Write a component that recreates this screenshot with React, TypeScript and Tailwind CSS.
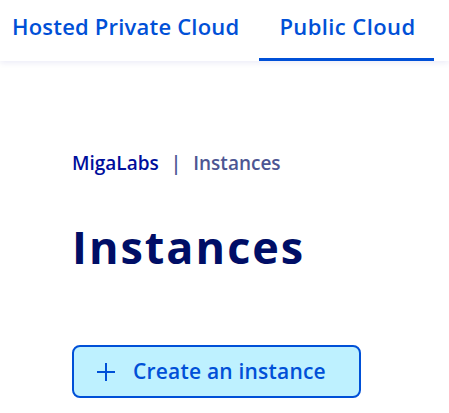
export default function App() {
  return (
    <div
      className="min-h-screen bg-white overflow-hidden"
      style={{ fontFamily: "'Open Sans', 'Noto Sans', sans-serif" }}
    >
      {/* ===== TABS ===== */}
      <nav className="relative h-[61px] bg-white shadow-[0_2px_6px_rgba(0,14,156,0.08)] flex whitespace-nowrap">
        <div className="pl-3 pr-5 pt-3 text-[22px] leading-[28px] tracking-[0.2px] font-semibold text-[#0050d7] h-full">
          Hosted Private Cloud
        </div>
        <div className="w-[175px] px-5 pt-3 text-[22px] leading-[28px] tracking-[0.4px] font-semibold text-[#0050d7] h-full border-b-[3px] border-[#0050d7]">
          Public Cloud
        </div>
      </nav>

      {/* ===== PAGE ===== */}
      <main className="pl-[72px] pt-[92px]">
        <div className="flex items-center gap-3 text-[19px] font-semibold leading-5">
          <span className="text-[#000e9c]">MigaLabs</span>
          <span className="text-[#4d5693]">|</span>
          <span className="text-[#4d5693]">Instances</span>
        </div>

        <h1 className="mt-[48px] text-[45px] font-bold leading-[52px] tracking-[2px] text-[#000e66]">
          Instances
        </h1>

        <button className="mt-[72px] w-[289px] h-[53px] rounded-lg border-2 border-[#0050d7] bg-[#bef1ff] flex items-center pl-[23px] gap-[18px] text-[21px] tracking-[0.2px] font-semibold text-[#0050d7]">
          <svg width="18" height="18" viewBox="0 0 18 18" fill="none" stroke="currentColor" strokeWidth="2">
            <path d="M9 0v18M0 9h18" />
          </svg>
          Create an instance
        </button>
      </main>
    </div>
  );
}
